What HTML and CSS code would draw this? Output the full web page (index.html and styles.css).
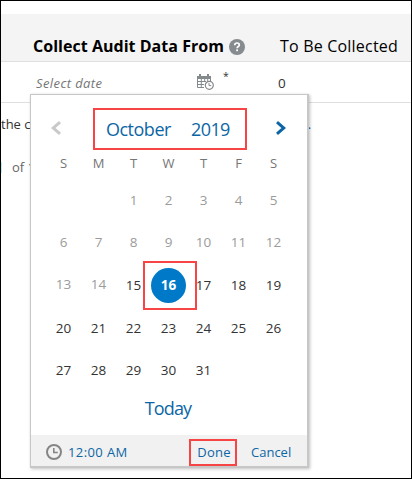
FILE: index.html
```html
<!DOCTYPE html>
<html lang="en">
<head>
<meta charset="utf-8">
<title>Collect Audit Data</title>
<link rel="stylesheet" href="styles.css">
</head>
<body>
<div class="page">
  <div class="table-head">
    <span class="th-main">Collect Audit Data From</span>
    <svg class="help" viewBox="0 0 16 16"><circle cx="8" cy="8" r="8" fill="#858b8f"/><path d="M5.7 6.2C5.8 4.7 6.7 4 8 4s2.3.7 2.3 1.9c0 1.6-2.2 1.6-2.2 3.4" fill="none" stroke="#fff" stroke-width="1.7"/><rect x="7.2" y="10.4" width="1.8" height="1.8" fill="#fff"/></svg>
    <span class="th-count">To Be Collected</span>
  </div>
  <div class="table-row">
    <span class="placeholder">Select date</span>
    <svg class="cal-icon" viewBox="0 0 17 16"><path d="M0 2h2V0h2v2h6V0h2v2h2v3H0z" fill="#84898c"/><path d="M.5 5v8.5H7M4.3 5v8.5M7.7 5v3M10.7 5v2M13.5 5v2M0 7.5h9M0 10.5h7" fill="none" stroke="#84898c"/><circle cx="12.3" cy="11.3" r="4" fill="#fff" stroke="#84898c" stroke-width="1.2"/><path d="M12 9v2.6h2.2" fill="none" stroke="#84898c"/></svg>
    <span class="required">*</span>
    <span class="count">0</span>
  </div>
  <div class="note"><span>the c</span><span class="note-end">e.</span></div>
  <div class="pager"><i class="page-edge"></i><span>of 1</span></div>

  <div class="popup">
    <div class="cal-head">
      <svg class="arrow" viewBox="0 0 10 14"><path d="M9 1.2 2.2 7 9 12.8" fill="none" stroke="#c9c9c9" stroke-width="3"/></svg>
      <div class="period mark"><span class="month">October</span><span class="year">2019</span></div>
      <svg class="arrow" viewBox="0 0 10 14"><path d="M1 1.2 7.8 7 1 12.8" fill="none" stroke="#0c66a5" stroke-width="3"/></svg>
    </div>
    <div class="week names"><span>S</span><span>M</span><span>T</span><span>W</span><span>T</span><span>F</span><span>S</span></div>
    <div class="days">
      <div class="week past"><span></span><span></span><span>1</span><span>2</span><span>3</span><span>4</span><span>5</span></div>
      <div class="week past"><span>6</span><span>7</span><span>8</span><span>9</span><span>10</span><span>11</span><span>12</span></div>
      <div class="week"><span class="off">13</span><span class="off">14</span><span class="low">15</span><span class="cell"><b class="selected">16</b><i class="mark day-mark"></i></span><span class="low">17</span><span class="low">18</span><span class="low">19</span></div>
      <div class="week"><span>20</span><span>21</span><span>22</span><span>23</span><span>24</span><span>25</span><span>26</span></div>
      <div class="week"><span>27</span><span>28</span><span>29</span><span>30</span><span>31</span><span></span><span></span></div>
    </div>
    <div class="today"><span>Today</span></div>
    <div class="foot">
      <svg class="clock" viewBox="0 0 16 16"><circle cx="8" cy="8" r="7" fill="none" stroke="#858585" stroke-width="2"/><path d="M7.8 4v4.5h4" fill="none" stroke="#858585" stroke-width="1.6"/></svg>
      <span class="time">12:00 AM</span>
      <span class="done mark"><span>Done</span></span>
      <span class="cancel">Cancel</span>
    </div>
  </div>
</div>
</body>
</html>
```
FILE: styles.css
```css
* { box-sizing: border-box; }
body {
  margin: 0;
  font-family: "Open Sans", "Noto Sans", sans-serif;
  font-size: 13px;
  color: #333;
}
svg { display: block; flex: none; }
span { white-space: nowrap; }
.page {
  position: relative;
  width: 412px;
  height: 479px;
  border: 1px solid #000;
  background: #fff;
  overflow: hidden;
}
.table-head {
  display: flex;
  margin-top: 13px;
  height: 48px;
  padding: 20px 0 0 32px;
  background: #f4f4f4;
  border-bottom: 1px solid #dfdfdf;
  color: #000;
  font-size: 16px;
  line-height: 24px;
}
.th-main { width: 196px; font-weight: 700; letter-spacing: 0.03px; }
.help { width: 16px; height: 16px; margin-top: 5px; }
.th-count { margin-left: 35px; letter-spacing: 0.2px; }
.table-row {
  display: flex;
  height: 41px;
  padding-left: 35px;
  border-bottom: 1px solid #dfdfdf;
  line-height: 43px;
}
.placeholder { width: 161px; color: #757575; font-style: italic; letter-spacing: 0.4px; }
.cal-icon { width: 17px; height: 16px; margin-top: 12px; }
.required { width: 63px; padding-left: 9px; line-height: 28px; font-size: 10.5px; }
.count { margin-left: 1px; font-size: 13.5px; }
.note { display: flex; height: 42px; line-height: 42px; }
.note-end { margin-left: 270px; color: #0c66a5; }
.pager { display: flex; height: 46px; line-height: 45px; color: #666; }
.page-edge { width: 1px; height: 11px; margin: 17px 10px 0 0; background: #b5f0ee; }
.mark { border: 2px solid #f74545; }

.popup {
  position: absolute;
  left: 29px;
  top: 93px;
  width: 279px;
  height: 374px;
  border: 1px solid #c7c7c7;
  border-right-width: 2px;
  border-bottom-width: 2px;
  background: #fff;
  box-shadow: 1px 1px 3px rgba(0, 0, 0, .25);
}
.cal-head { display: flex; height: 55px; padding: 13px 0 0 20px; }
.arrow { width: 10px; height: 14px; margin-top: 13px; }
.period {
  display: flex;
  width: 154px;
  height: 42px;
  margin: 0 29px 0 32px;
  padding-left: 11px;
  color: #0c66a5;
  font-size: 18px;
  line-height: 38px;
}
.month { width: 85px; letter-spacing: -0.5px; }
.year { letter-spacing: -0.6px; }
.week {
  display: grid;
  grid-template-columns: repeat(7, 35px);
  height: 42px;
  padding-left: 15px;
  line-height: 42px;
  text-align: center;
  font-size: 13.5px;
}
.names { height: 26px; line-height: 26px; color: #757575; font-size: 13px; }
.days { padding-top: 3px; }
.past, .off { color: #9b9b9b; }
.low { padding-top: 1px; }
.days .week:nth-child(4) { margin-top: 2px; }
.cell { position: relative; display: block; }
.selected {
  display: block;
  width: 35px;
  height: 35px;
  margin-top: 5px;
  border-radius: 50%;
  background: #007ac8;
  color: #fff;
  line-height: 35px;
}
.day-mark { position: absolute; left: -8px; top: -2px; width: 54px; height: 49px; }
.today {
  height: 44px;
  padding-right: 2px;
  color: #0c66a5;
  font-size: 18px;
  line-height: 34px;
  text-align: center;
  letter-spacing: -0.9px;
}
.foot {
  display: flex;
  height: 31px;
  padding-left: 15px;
  background: #f1f1f1;
  color: #0c66a5;
  line-height: 34px;
}
.clock { width: 16px; height: 16px; margin-top: 9px; }
.time { width: 127px; padding-left: 6px; letter-spacing: 0.4px; }
.done { width: 48px; height: 27px; margin-top: 4px; padding-left: 2px; line-height: 22px; text-align: center; letter-spacing: 0.2px; }
.cancel { margin-left: 14px; }
```
